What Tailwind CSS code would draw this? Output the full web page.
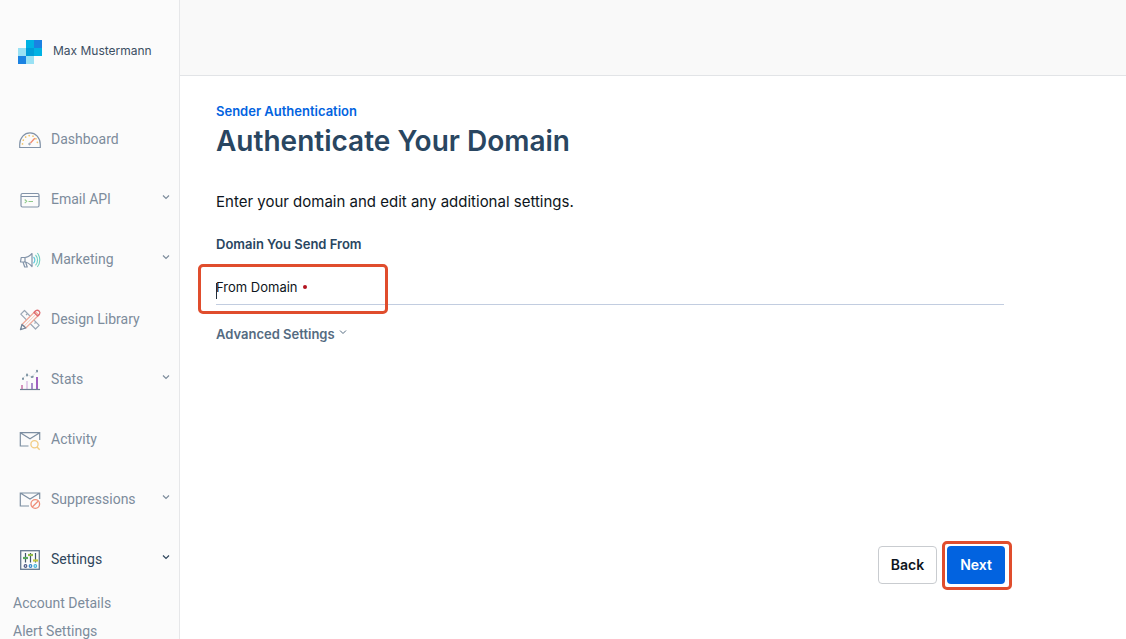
<!DOCTYPE html>
<html lang="en">
<head>
<meta charset="utf-8">
<meta name="viewport" content="width=device-width, initial-scale=1">
<title>Authenticate Your Domain</title>
<script src="https://cdn.jsdelivr.net/npm/@tailwindcss/browser@4"></script>
</head>
<body class="bg-white font-['Inter',sans-serif] text-[#0d1520]">
<div class="flex h-screen overflow-hidden">
  <aside class="flex w-45 shrink-0 flex-col border-r border-[#e6e7e9] bg-[#fbfbfb] font-['Roboto',sans-serif] text-[14px] text-[#7d8c9c]">
    <div class="flex h-[109px] shrink-0 items-center pb-2 pl-[18px]">
      <svg class="mt-[3px] size-6 shrink-0" viewBox="0 0 24 24" shape-rendering="crispEdges" aria-hidden="true">
        <path fill="#99e1f4" d="M0 8h8v8H0zM8 16h8v8H8z"/>
        <path fill="#1a82e2" d="M0 16h8v8H0zM16 0h8v8h-8z"/>
        <path fill="#00b2e3" d="M8 0h8v8H8zM16 8h8v8h-8z"/>
        <path fill="#009dd9" d="M8 8h8v8H8z"/>
      </svg>
      <span class="ml-[11px] font-['Inter',sans-serif] text-[12px] text-[#3c4f63]">Max Mustermann</span>
    </div>
    <nav aria-label="Main">
      <ul>
        <li><a href="#" class="flex h-15 items-center pl-[18px] pr-[9px]">
          <svg class="mt-px size-6 shrink-0" viewBox="0 0 24 24" fill="none" aria-hidden="true"><path stroke="#8293a8" stroke-width="1.2" d="M1.7 19.5v-3C1.7 9.700 6.500 4.800 12 4.800s10.300 4.900 10.300 11.700v3z"/><path stroke="#f3c56b" stroke-width="1.7" stroke-linecap="round" stroke-dasharray=".1 3.800" d="M4.500 16c0-5 3.500-8.500 7.500-8.500s7.500 3.500 7.500 8.500"/><path stroke="#f08a70" stroke-width="1.300" d="m12.500 15 4.300-4.700"/><circle cx="11.500" cy="16" r=".8" stroke="#8293a8"/></svg>
          <span class="ml-[9px]">Dashboard</span></a></li>
        <li><a href="#" class="flex h-15 items-center pl-[18px] pr-[9px]">
          <svg class="mt-px size-6 shrink-0" viewBox="0 0 24 24" fill="none" aria-hidden="true"><rect x="3" y="5.500" width="18" height="13.500" rx="1.500" stroke="#8293a8" stroke-width="1.200"/><path stroke="#8293a8" d="M3 8.500h18"/><path stroke="#8fc98a" stroke-width="1.100" d="m6.700 11.500 2 1.800-2 1.800M10.500 13.500H15"/></svg>
          <span class="ml-[9px]">Email API</span>
          <svg class="mb-1 ml-auto h-2 w-2" viewBox="0 0 8 8" fill="none" stroke="currentColor" stroke-width="1.200" aria-hidden="true"><path d="m1 2.500 3 3 3-3"/></svg></a></li>
        <li><a href="#" class="flex h-15 items-center pl-[18px] pr-[9px]">
          <svg class="mt-px size-6 shrink-0" viewBox="0 0 24 24" fill="none" aria-hidden="true"><path stroke="#8293a8" stroke-width="1.200" stroke-linejoin="round" d="M7 9.500H3.200L2.500 14H6c3 0 5.500 1.500 8 4.500V5.500C11.500 8.300 9.500 9.500 7 9.500V14M5 14l1.700 5h2.500l-1.500-4.700"/><path stroke="#5cc7dc" stroke-width="1.200" d="M15.500 9c1.800 1.500 1.800 4.700 0 6.200"/><path stroke="#72d0c0" stroke-width="1.100" d="M17.500 7c2.700 2.800 2.700 7.500 0 10.300M19.300 5c3.300 4 3.300 10 0 14"/></svg>
          <span class="ml-[9px]">Marketing</span>
          <svg class="mb-1 ml-auto h-2 w-2" viewBox="0 0 8 8" fill="none" stroke="currentColor" stroke-width="1.200" aria-hidden="true"><path d="m1 2.500 3 3 3-3"/></svg></a></li>
        <li><a href="#" class="flex h-15 items-center pl-[18px] pr-[9px]">
          <svg class="mt-px size-6 shrink-0" viewBox="0 0 24 24" fill="none" stroke-linejoin="round" aria-hidden="true"><path stroke="#9aa7b5" stroke-width="1.200" d="m6.500 2.500-3.700 3.700L17.500 21l3.700-3.700zM9.500 5.500 8 7M12.500 8.500 11 10M18 14l-1.500 1.500"/><path fill="#fbfbfb" stroke="#f0a898" stroke-width="1.200" d="m4 16.500 13-13L20.800 7l-13 13z"/><path stroke="#f6cabb" d="m6 18.200 13-13"/><path stroke="#de6b70" stroke-width="1.300" d="m16 4.500 1.700-1.800c2.500-1.500 5.200 1.200 3.800 3.500L19.700 8z"/><path fill="#fbfbfb" stroke="#75859a" stroke-width="1.300" d="m4 16.500-1.500 5.200L7.700 20z"/></svg>
          <span class="ml-[9px]">Design Library</span></a></li>
        <li><a href="#" class="flex h-15 items-center pl-[18px] pr-[9px]">
          <svg class="mt-px size-6 shrink-0" viewBox="0 0 24 24" fill="none" aria-hidden="true"><path stroke="#d693bd" stroke-width="2" d="M4 21v-4"/><path stroke="#e4cdea" stroke-width="2" d="M9 21v-8"/><path stroke="#a88fcb" stroke-width="2" d="M14 21v-6"/><path stroke="#a05fc0" stroke-width="2" d="M19 21V9"/><path stroke="#6f7f92" stroke-width="1.200" d="M2 21.500h20"/><path stroke="#7990a0" stroke-width="2" stroke-linecap="round" d="M5 10.500v.5M9 6.500v1M13.700 9l1-.3M19 2.700v.8"/><path stroke="#a6b9c2" stroke-width=".7" stroke-dasharray="1 1" d="m5 10 4-3.500 5 2.500 5-6"/></svg>
          <span class="ml-[9px]">Stats</span>
          <svg class="mb-1 ml-auto h-2 w-2" viewBox="0 0 8 8" fill="none" stroke="currentColor" stroke-width="1.200" aria-hidden="true"><path d="m1 2.500 3 3 3-3"/></svg></a></li>
        <li><a href="#" class="flex h-15 items-center pl-[18px] pr-[9px]">
          <svg class="mt-px size-6 shrink-0" viewBox="0 0 24 24" fill="none" aria-hidden="true"><path stroke="#7d8fa2" stroke-width="1.200" d="M10.500 18H2.300V4.700h19.400V12M2.300 4.700l9.700 6 9.700-6"/><circle cx="16.500" cy="16.300" r="3.600" stroke="#f2cc83" stroke-width="1.300"/><path stroke="#f2cc83" stroke-width="1.400" d="m19 19 2.700 2.700"/></svg>
          <span class="ml-[9px]">Activity</span></a></li>
        <li><a href="#" class="flex h-15 items-center pl-[18px] pr-[9px]">
          <svg class="mt-px size-6 shrink-0" viewBox="0 0 24 24" fill="none" aria-hidden="true"><path stroke="#7d8fa2" stroke-width="1.200" d="M11 18H2.300V5h19.400v6M2.300 5l9.700 6 9.700-6"/><circle cx="17.300" cy="16" r="4.300" stroke="#ef8d78" stroke-width="1.300"/><path stroke="#ef8d78" stroke-width="1.300" d="m14.300 19 6-6"/></svg>
          <span class="ml-[9px]">Suppressions</span>
          <svg class="mb-1 ml-auto h-2 w-2" viewBox="0 0 8 8" fill="none" stroke="currentColor" stroke-width="1.200" aria-hidden="true"><path d="m1 2.500 3 3 3-3"/></svg></a></li>
        <li><a href="#" aria-current="page" class="flex h-15 items-center pl-[18px] pr-[9px] text-[#2f465c]">
          <svg class="mt-px size-6 shrink-0" viewBox="0 0 24 24" fill="none" aria-hidden="true"><rect x="2.700" y="2.700" width="18.600" height="18.600" stroke="#667990" stroke-width="1.300"/><path stroke="#41566b" stroke-width="1.200" d="M7.500 5v9.500M12.500 5v9.500M17.500 5v9.500"/><path stroke="#56a65b" stroke-width="2.200" d="M5 10h5"/><path stroke="#93bd48" stroke-width="2.200" d="M10 7h5"/><path stroke="#c2ca3e" stroke-width="2.200" d="M15 12.500h5"/><circle cx="7.500" cy="18" r="1.300" stroke="#4e5985" stroke-width="1.200"/><circle cx="12.500" cy="18" r="1.300" stroke="#3686c8" stroke-width="1.200"/><circle cx="17.300" cy="18" r="1.300" stroke="#43b6dc" stroke-width="1.200"/></svg>
          <span class="ml-[9px]">Settings</span>
          <svg class="mb-1 ml-auto h-2 w-2" viewBox="0 0 8 8" fill="none" stroke="currentColor" stroke-width="1.200" aria-hidden="true"><path d="m1 2.500 3 3 3-3"/></svg></a>
          <ul class="pl-[13px] leading-7">
            <li><a href="#">Account Details</a></li>
            <li><a href="#">Alert Settings</a></li>
          </ul></li>
      </ul>
    </nav>
  </aside>
  <div class="flex min-w-0 grow flex-col">
    <header class="h-19 shrink-0 border-b border-[#e2e4e7] bg-[#f9f9f9]"></header>
    <main class="mr-[122px] ml-9 flex grow flex-col pt-[25px] pb-[55px]">
      <a href="#" class="self-start text-[13px] leading-5 font-semibold text-[#0263e0]">Sender Authentication</a>
      <h1 class="text-[28px] leading-10 font-semibold text-[#294661]">Authenticate Your Domain</h1>
      <p class="mt-[29px] text-[15px] leading-6">Enter your domain and edit any additional settings.</p>
      <form class="flex grow flex-col">
        <h2 class="mt-5 text-[13px] leading-5 font-semibold text-[#294661]">Domain You Send From</h2>
        <div class="relative mt-[23px] flex h-7 items-start border-b border-[#c2cde0]">
          <label for="domain" class="flex items-center gap-[5px] text-[13px] leading-5">From Domain <span class="mb-px size-1 rounded-full bg-[#b3141f]" aria-hidden="true"></span></label>
          <input id="domain" type="text" required class="absolute inset-0 bg-transparent caret-transparent outline-none">
          <span class="absolute top-[6px] left-0 h-4 w-px bg-[#1f2c3a]" aria-hidden="true"></span>
          <span class="pointer-events-none absolute -top-[13px] -left-[18px] h-[50px] w-[190px] rounded-[5px] border-3 border-[#e04d2d]" aria-hidden="true"></span>
        </div>
        <button type="button" class="mt-[19px] flex items-center gap-1 self-start text-[13px] leading-5 font-semibold text-[#546b81]">Advanced Settings
          <svg class="mb-1 size-2" viewBox="0 0 8 8" fill="none" stroke="currentColor" aria-hidden="true"><path d="m1 2.500 3 3 3-3"/></svg></button>
        <div class="-mr-px mt-auto flex justify-end gap-[10px] text-[14px] font-semibold">
          <button type="button" class="h-[38px] w-[59px] rounded-[4px] border border-[#c9ccd0] bg-white pb-px">Back</button>
          <div class="relative">
            <button type="submit" class="h-[38px] w-[58px] rounded-[4px] bg-[#0263e0] pb-px text-white">Next</button>
            <span class="pointer-events-none absolute -top-[5px] -left-[5px] h-[49px] w-[70px] rounded-[5px] border-3 border-[#e04d2d]" aria-hidden="true"></span>
          </div>
        </div>
      </form>
    </main>
  </div>
</div>
</body>
</html>
